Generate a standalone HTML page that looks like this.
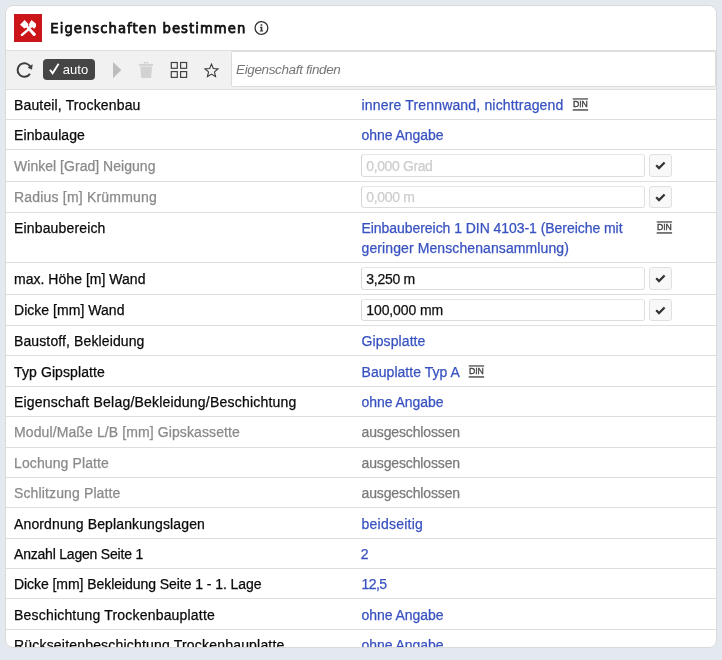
<!DOCTYPE html>
<html lang="de">
<head>
<meta charset="utf-8">
<title>Eigenschaften bestimmen</title>
<style>
*{box-sizing:border-box;margin:0;padding:0}
html,body{width:722px;height:660px;overflow:hidden}
body{background:#e4e9f0;font-family:"Liberation Sans",sans-serif;font-size:14px;color:#111;position:relative}
.card{will-change:transform;position:absolute;left:5px;top:5px;width:712px;height:643px;background:#fff;border:1px solid #dadada;border-radius:8px;overflow:hidden}
.logo{position:absolute;left:8px;top:8px;width:28px;height:28px;background:#cc1518}
.logo svg{position:absolute;left:6px;top:6px}
.title{position:absolute;left:44.3px;top:13px;font-family:"DejaVu Sans","Liberation Sans",sans-serif;font-weight:normal;font-size:13.2px;-webkit-text-stroke:0.75px #111;line-height:20px;white-space:nowrap;color:#111}
.info{position:absolute;left:247px;top:13px}
.bar{position:absolute;left:0;top:44px;width:710px;height:40px;background:#f1f1f1;border-top:1px solid #dedede;border-bottom:1px solid #dedede}
.bar svg{position:absolute}
.auto{position:absolute;left:37px;top:8px;width:52px;height:21px;border-radius:4px;background:#454545;color:#fff;font-size:13px;line-height:21px;white-space:nowrap}
.auto span{position:absolute;left:19.8px;top:0}
.search{position:absolute;left:225px;text-indent:-1px;top:0px;width:485px;height:36px;background:#fff;border:1px solid #dcdcdc;border-radius:2px;font-style:italic;color:#777;font-size:13.5px;line-height:35px;padding-left:5px;white-space:nowrap}
.r{position:absolute;left:0;width:710px;border-top:1px solid #dedede}
.l,.v,.inp{-webkit-text-stroke:0.25px currentColor}
.l,.v{position:absolute;top:5px;line-height:20px;white-space:nowrap}
.l{left:8px;color:#0a0a0a}
.v{left:355.5px;color:#3852c0}
.dis .l{color:#8a8a8a}
.dis .v{color:#7a7a7a}
.inp{position:absolute;left:355px;top:4px;width:284px;height:23px;border:1px solid;border-color:#e6e6e6 #e0e0e0 #dcdcdc #d6d6d6;border-radius:3px;background:#fff;line-height:23px;padding-left:4.3px;color:#111;white-space:nowrap}
.inp.ph{color:#cdcdcd}
.ok{position:absolute;left:643px;top:4px;width:23px;height:23px;border:1px solid #e0e0e0;border-radius:3px;background:#f8f8f8}
.ok svg{position:absolute;left:5px;top:6px}
.din{position:absolute;top:8px;width:17px;height:14px}
.din text{font-family:"Liberation Sans",sans-serif;font-size:9.3px;fill:#444;stroke:#444;stroke-width:.4px}
</style>
</head>
<body>
<div class="card">
  <div class="logo"><svg width="16" height="16" viewBox="0 0 16 16"><g fill="#fff"><path d="M4.6 0 L0 4.8 L4.4 8.4 L6.2 7.4 L13 15.4 A1.5 1.5 0 0 0 15.4 13.2 L8.2 6 L8.4 4 Z"/><path d="M11.5 0 L16 3.8 L16 6.6 L14.2 8.8 L12.4 7.2 L10.8 8.3 L9 6.4 L9.3 3.4 Z"/><path d="M9.6 7 L11 8.8 L2.6 16 A1.3 1.3 0 0 1 0.9 14.2 Z"/></g></svg></div>
  <div class="title" id="title" style="letter-spacing:1.043px">Eigenschaften bestimmen</div>
  <svg class="info" width="16" height="16" viewBox="0 0 16 16"><circle cx="8.45" cy="8.95" r="6.4" fill="none" stroke="#333" stroke-width="1.3"/><rect x="7.6" y="5.3" width="1.7" height="1.5" fill="#333"/><path d="M6.9 7.7h2.4v3.7h0.8v1h-3.3v-1h0.9v-2.7h-0.8z" fill="#333"/></svg>
  <div class="bar">
    <svg style="left:9px;top:9px" width="20" height="20" viewBox="0 0 20 20"><path d="M14.97 13.9 A6.8 6.8 0 1 1 15.4 6.81" fill="none" stroke="#3c3c3c" stroke-width="2"/><path d="M17.3 4.7 L13.0 7.5 L16.7 9.3 Z" fill="#3c3c3c" stroke="#3c3c3c" stroke-width="0.6" stroke-linejoin="round"/></svg>
    <div class="auto"><svg style="left:6.4px;top:3.6px" width="12" height="12" viewBox="0 0 12 12"><path d="M1 6.8 L3.6 10.3 L9.6 0.8" fill="none" stroke="#fff" stroke-width="1.9"/></svg><span id="auto" style="letter-spacing:0.047px">auto</span></div>
    <svg style="left:107px;top:11px" width="9" height="17" viewBox="0 0 9 17"><path d="M0 0 L8.3 8.1 L0 16.2 Z" fill="#bdbdbd"/></svg>
    <svg style="left:132px;top:10.1px" width="16" height="18" viewBox="0 0 16 18"><g fill="#d2d2d2"><rect x="0.9" y="2.9" width="14.1" height="2"/><path d="M5.9 0.9h4.1v2h-1v-1h-2.1v1h-1z"/><path d="M2.3 5.5h11.7l-0.9 11.6h-9.9z"/></g></svg>
    <svg style="left:164px;top:10.1px" width="18" height="18" viewBox="0 0 18 18"><g fill="none" stroke="#444" stroke-width="1.2"><rect x="1.3" y="1.5" width="6" height="5.8"/><rect x="10.6" y="1.5" width="6" height="5.8"/><rect x="1.3" y="10.6" width="6" height="5.8"/><rect x="10.6" y="10.6" width="6" height="5.8"/></g></svg>
    <svg style="left:197px;top:11px" width="18" height="18" viewBox="0 0 18 18"><path id="star" fill="none" stroke="#333" stroke-width="1.05" stroke-linejoin="miter" d="M8.50 2.10 L10.32 6.49 L15.06 6.87 L11.45 9.96 L12.56 14.58 L8.50 12.10 L4.44 14.58 L5.55 9.96 L1.94 6.87 L6.68 6.49 Z"/></svg>
    <div class="search"><span id="search" style="letter-spacing:-0.366px">Eigenschaft finden</span></div>
  </div>
<div class="r" style="top:83px;height:30px"><span class="l" id="l0" style="top:5px;letter-spacing:0.145px">Bauteil, Trockenbau</span><span class="v" id="v0_0" style="top:5px;letter-spacing:0.169px">innere Trennwand, nichttragend</span><svg class="din" style="top:8px;left:566.0px" width="17" height="14" viewBox="0 0 17 14"><rect x="0.7" y="0.2" width="15.4" height="1.5" fill="#666"/><rect x="0.7" y="11.1" width="15.4" height="1.7" fill="#666"/><text x="0.9" y="9.4" textLength="15" lengthAdjust="spacingAndGlyphs">DIN</text></svg></div>
<div class="r" style="top:113px;height:30px"><span class="l" id="l1" style="top:5px;letter-spacing:0.094px">Einbaulage</span><span class="v" id="v1_0" style="top:5px;letter-spacing:-0.049px">ohne Angabe</span></div>
<div class="r dis" style="top:143px;height:32px"><span class="l" id="l2" style="top:6px;letter-spacing:0.031px">Winkel [Grad] Neigung</span><div class="inp ph" style="height:23px;line-height:23px"><span id="v2_0" style="letter-spacing:-0.386px">0,000 Grad</span></div><div class="ok" style="height:23px"><svg width="11" height="9" viewBox="0 0 11 9"><path d="M1.2 4.3 L4 7.1 L9.6 1.5" fill="none" stroke="#333" stroke-width="2.2"/></svg></div></div>
<div class="r dis" style="top:175px;height:31px"><span class="l" id="l3" style="top:5px;letter-spacing:0.196px">Radius [m] Krümmung</span><div class="inp ph" style="height:22px;line-height:21px"><span id="v3_0" style="letter-spacing:-0.342px">0,000 m</span></div><div class="ok" style="height:22px"><svg width="11" height="9" viewBox="0 0 11 9"><path d="M1.2 4.3 L4 7.1 L9.6 1.5" fill="none" stroke="#333" stroke-width="2.2"/></svg></div></div>
<div class="r" style="top:206px;height:50px"><span class="l" id="l4" style="top:5px;letter-spacing:0.153px">Einbaubereich</span><span class="v" id="v4_0" style="top:5px;letter-spacing:-0.051px">Einbaubereich 1 DIN 4103-1 (Bereiche mit</span><span class="v" id="v4_1" style="top:25px;letter-spacing:0.101px">geringer Menschenansammlung)</span><svg class="din" style="top:8px;left:649.5px" width="17" height="14" viewBox="0 0 17 14"><rect x="0.7" y="0.2" width="15.4" height="1.5" fill="#666"/><rect x="0.7" y="11.1" width="15.4" height="1.7" fill="#666"/><text x="0.9" y="9.4" textLength="15" lengthAdjust="spacingAndGlyphs">DIN</text></svg></div>
<div class="r" style="top:256px;height:32px"><span class="l" id="l5" style="top:6px;letter-spacing:0.029px">max. Höhe [m] Wand</span><div class="inp" style="height:23px;line-height:23px"><span id="v5_0" style="letter-spacing:-0.271px">3,250 m</span></div><div class="ok" style="height:23px"><svg width="11" height="9" viewBox="0 0 11 9"><path d="M1.2 4.3 L4 7.1 L9.6 1.5" fill="none" stroke="#333" stroke-width="2.2"/></svg></div></div>
<div class="r" style="top:288px;height:31px"><span class="l" id="l6" style="top:5px;letter-spacing:0.037px">Dicke [mm] Wand</span><div class="inp" style="height:22px;line-height:21px"><span id="v6_0" style="letter-spacing:-0.113px">100,000 mm</span></div><div class="ok" style="height:22px"><svg width="11" height="9" viewBox="0 0 11 9"><path d="M1.2 4.3 L4 7.1 L9.6 1.5" fill="none" stroke="#333" stroke-width="2.2"/></svg></div></div>
<div class="r" style="top:319px;height:30px"><span class="l" id="l7" style="top:5px;letter-spacing:0.116px">Baustoff, Bekleidung</span><span class="v" id="v7_0" style="top:5px;letter-spacing:0.095px">Gipsplatte</span></div>
<div class="r" style="top:349px;height:31px"><span class="l" id="l8" style="top:6px;letter-spacing:0.107px">Typ Gipsplatte</span><span class="v" id="v8_0" style="top:6px;letter-spacing:0.045px">Bauplatte Typ A</span><svg class="din" style="top:9px;left:461.5px" width="17" height="14" viewBox="0 0 17 14"><rect x="0.7" y="0.2" width="15.4" height="1.5" fill="#666"/><rect x="0.7" y="11.1" width="15.4" height="1.7" fill="#666"/><text x="0.9" y="9.4" textLength="15" lengthAdjust="spacingAndGlyphs">DIN</text></svg></div>
<div class="r" style="top:380px;height:30px"><span class="l" id="l9" style="top:5px;letter-spacing:0.208px">Eigenschaft Belag/Bekleidung/Beschichtung</span><span class="v" id="v9_0" style="top:5px;letter-spacing:-0.049px">ohne Angabe</span></div>
<div class="r dis" style="top:410px;height:31px"><span class="l" id="l10" style="top:5px;letter-spacing:0.108px">Modul/Maße L/B [mm] Gipskassette</span><span class="v" id="v10_0" style="top:5px;letter-spacing:-0.136px">ausgeschlossen</span></div>
<div class="r dis" style="top:441px;height:30px"><span class="l" id="l11" style="top:5px;letter-spacing:0.113px">Lochung Platte</span><span class="v" id="v11_0" style="top:5px;letter-spacing:-0.136px">ausgeschlossen</span></div>
<div class="r dis" style="top:471px;height:30px"><span class="l" id="l12" style="top:5px;letter-spacing:0.130px">Schlitzung Platte</span><span class="v" id="v12_0" style="top:5px;letter-spacing:-0.136px">ausgeschlossen</span></div>
<div class="r" style="top:501px;height:31px"><span class="l" id="l13" style="top:6px;letter-spacing:0.130px">Anordnung Beplankungslagen</span><span class="v" id="v13_0" style="top:6px;letter-spacing:0.234px">beidseitig</span></div>
<div class="r" style="top:532px;height:30px"><span class="l" id="l14" style="top:5px;letter-spacing:-0.205px">Anzahl Lagen Seite 1</span><span class="v" id="v14_0" style="top:5px;margin-left:-0.8px;">2</span></div>
<div class="r" style="top:562px;height:30px"><span class="l" id="l15" style="top:5px;letter-spacing:-0.059px">Dicke [mm] Bekleidung Seite 1 - 1. Lage</span><span class="v" id="v15_0" style="top:5px;letter-spacing:-0.562px">12,5</span></div>
<div class="r" style="top:592px;height:31px"><span class="l" id="l16" style="top:6px;letter-spacing:0.195px">Beschichtung Trockenbauplatte</span><span class="v" id="v16_0" style="top:6px;letter-spacing:-0.049px">ohne Angabe</span></div>
<div class="r" style="top:623px;height:31px"><span class="l" id="l17" style="top:5px;letter-spacing:0.191px">Rückseitenbeschichtung Trockenbauplatte</span><span class="v" id="v17_0" style="top:5px;letter-spacing:-0.049px">ohne Angabe</span></div>
</div>
</body>
</html>
